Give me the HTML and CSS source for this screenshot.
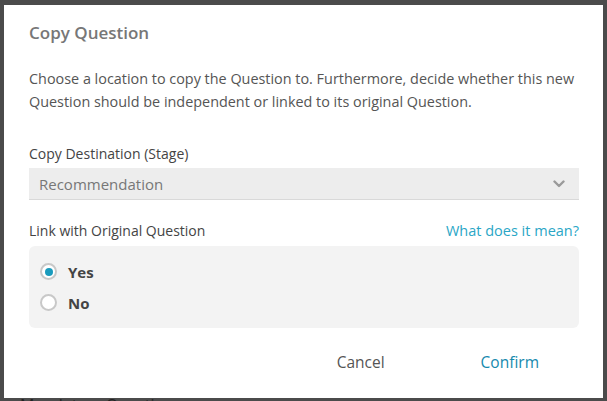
FILE: index.html
```html
<!DOCTYPE html>
<html lang="en">
<head>
<meta charset="utf-8">
<title>Copy Question</title>
<link rel="stylesheet" href="styles.css">
</head>
<body>
<div class="page">
  <div class="page-bottom">Mandatory Question</div>
</div>
<div class="modal" role="dialog" aria-labelledby="modal-title">
  <h2 class="modal-title" id="modal-title">Copy Question</h2>
  <p class="modal-desc">Choose a location to copy the Question to. Furthermore, decide whether this new Question should be independent or linked to its original Question.</p>

  <div class="field-label label-dest">Copy Destination (Stage)</div>
  <div class="select">
    <span class="select-value">Recommendation</span>
    <svg class="chevron" width="12" height="8" viewBox="0 0 12 8" aria-hidden="true">
      <path d="M1.5 1.5 L6 6 L10.5 1.5" fill="none" stroke="#9a9a9a" stroke-width="2.4" stroke-linecap="round" stroke-linejoin="round"/>
    </svg>
  </div>

  <div class="link-row">
    <span class="field-label">Link with Original Question</span>
    <a class="help-link" href="#">What does it mean?</a>
  </div>
  <div class="radio-box">
    <label class="radio-row"><span class="radio checked"></span><span class="radio-text">Yes</span></label>
    <label class="radio-row"><span class="radio"></span><span class="radio-text">No</span></label>
  </div>

  <div class="actions">
    <button class="btn btn-cancel">Cancel</button>
    <button class="btn btn-confirm">Confirm</button>
  </div>
</div>
</body>
</html>
```

FILE: styles.css
```css
* { box-sizing: border-box; }
html, body { margin: 0; padding: 0; }
body {
  width: 607px;
  height: 401px;
  overflow: hidden;
  background: #4b4b4b;
  font-family: "Open Sans", "Noto Sans", sans-serif;
  position: relative;
}
.page {
  height: 401px;
  display: flex;
  flex-direction: column;
  justify-content: flex-end;
  padding: 0 0 0 20px;
}
.page-bottom {
  font-size: 16px;
  color: #222;
  line-height: 12px;
  margin-bottom: -10px;
}
.modal {
  position: absolute;
  left: 4px;
  top: 5px;
  width: 599px;
  height: 393px;
  background: #fff;
  padding: 17px 24px 0 25px;
  display: flex;
  flex-direction: column;
}
.modal-title {
  margin: 0;
  font-size: 17px;
  font-weight: 600;
  color: #777;
  line-height: 22px;
}
.modal-desc {
  margin: 23px 0 0;
  font-size: 14.4px;
  line-height: 23px;
  color: #555;
}
.field-label {
  font-size: 14px;
  color: #444;
  line-height: 20px;
}
.label-dest { margin-top: 31px; }
.select {
  margin-top: 4px;
  height: 32px;
  background: #ededed;
  border-bottom: 1px solid #d9d9d9;
  display: flex;
  align-items: center;
  justify-content: space-between;
  padding: 0 14px 0 10px;
}
.select-value {
  font-size: 15px;
  color: #777;
}
.chevron { display: block; }
.link-row {
  margin-top: 21px;
  display: flex;
  justify-content: space-between;
  align-items: center;
  line-height: 20px;
}
.help-link {
  font-size: 14.5px;
  color: #2aa6c6;
  text-decoration: none;
}
.radio-box {
  margin-top: 5px;
  background: #f3f3f3;
  border-radius: 6px;
  padding: 10px 11px;
  display: flex;
  flex-direction: column;
}
.radio-row {
  height: 31px;
  display: flex;
  align-items: center;
  gap: 11px;
}
.radio {
  width: 17px;
  height: 17px;
  border-radius: 50%;
  border: 2px solid #c8c8c8;
  background: #fff;
  display: flex;
  align-items: center;
  justify-content: center;
}
.radio.checked::after {
  content: "";
  width: 8px;
  height: 8px;
  border-radius: 50%;
  background: #1a9bbd;
}
.radio-text {
  font-size: 15px;
  font-weight: 700;
  color: #444;
}
.actions {
  margin-top: 18px;
  display: flex;
  justify-content: flex-end;
  padding-right: 40px;
  gap: 96px;
}
.btn {
  border: 0;
  background: none;
  padding: 0;
  font-family: inherit;
  font-size: 15.5px;
  line-height: 32px;
  cursor: pointer;
}
.btn-cancel { color: #555; }
.btn-confirm { color: #1689ad; }
```
